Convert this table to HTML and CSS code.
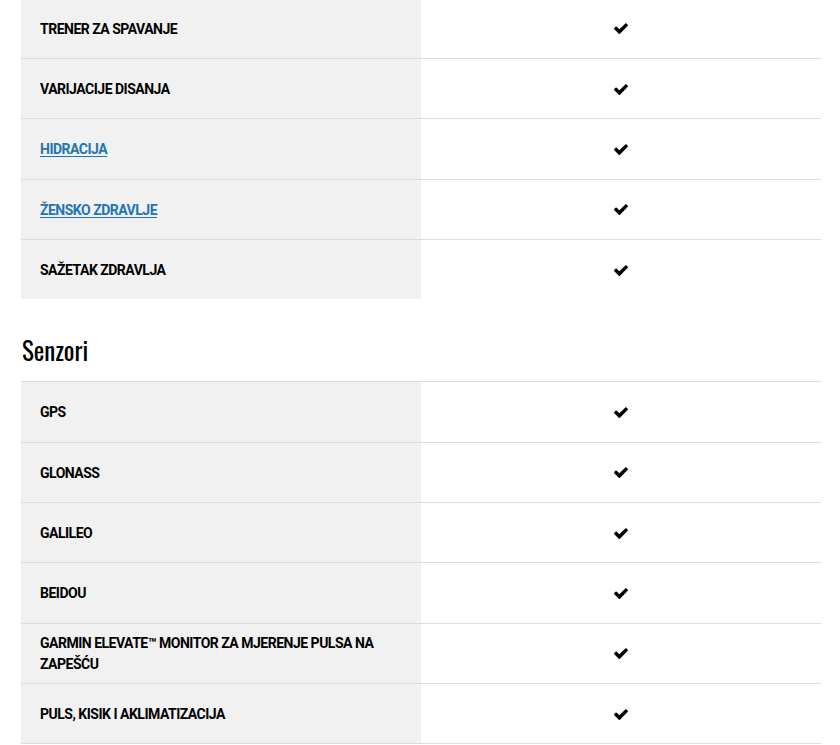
FILE: index.html
```html
<!DOCTYPE html>
<html lang="hr">
<head>
<meta charset="utf-8">
<title>Specifikacije</title>
<link rel="stylesheet" href="styles.css">
</head>
<body>
<div class="page">
  <div class="spec-table spec-table--first">
    <div class="spec-row"><div class="spec-name">TRENER ZA SPAVANJE</div><div class="spec-val"><svg class="check" viewBox="121 330 1550 1192"><path d="M1671 566q0 40-28 68l-724 724-136 136q-28 28-68 28t-68-28l-136-136-362-362q-28-28-28-68t28-68l136-136q28-28 68-28t68 28l294 295 656-657q28-28 68-28t68 28l136 136q28 28 28 68z"/></svg></div></div>
    <div class="spec-row"><div class="spec-name">VARIJACIJE DISANJA</div><div class="spec-val"><svg class="check" viewBox="121 330 1550 1192"><path d="M1671 566q0 40-28 68l-724 724-136 136q-28 28-68 28t-68-28l-136-136-362-362q-28-28-28-68t28-68l136-136q28-28 68-28t68 28l294 295 656-657q28-28 68-28t68 28l136 136q28 28 28 68z"/></svg></div></div>
    <div class="spec-row"><div class="spec-name"><a class="spec-link" href="#">HIDRACIJA</a></div><div class="spec-val"><svg class="check" viewBox="121 330 1550 1192"><path d="M1671 566q0 40-28 68l-724 724-136 136q-28 28-68 28t-68-28l-136-136-362-362q-28-28-28-68t28-68l136-136q28-28 68-28t68 28l294 295 656-657q28-28 68-28t68 28l136 136q28 28 28 68z"/></svg></div></div>
    <div class="spec-row"><div class="spec-name"><a class="spec-link" href="#">ŽENSKO ZDRAVLJE</a></div><div class="spec-val"><svg class="check" viewBox="121 330 1550 1192"><path d="M1671 566q0 40-28 68l-724 724-136 136q-28 28-68 28t-68-28l-136-136-362-362q-28-28-28-68t28-68l136-136q28-28 68-28t68 28l294 295 656-657q28-28 68-28t68 28l136 136q28 28 28 68z"/></svg></div></div>
    <div class="spec-row"><div class="spec-name">SAŽETAK ZDRAVLJA</div><div class="spec-val"><svg class="check" viewBox="121 330 1550 1192"><path d="M1671 566q0 40-28 68l-724 724-136 136q-28 28-68 28t-68-28l-136-136-362-362q-28-28-28-68t28-68l136-136q28-28 68-28t68 28l294 295 656-657q28-28 68-28t68 28l136 136q28 28 28 68z"/></svg></div></div>
  </div>

  <h2 class="section-title">Senzori</h2>

  <div class="spec-table spec-table--closed">
    <div class="spec-row"><div class="spec-name">GPS</div><div class="spec-val"><svg class="check" viewBox="121 330 1550 1192"><path d="M1671 566q0 40-28 68l-724 724-136 136q-28 28-68 28t-68-28l-136-136-362-362q-28-28-28-68t28-68l136-136q28-28 68-28t68 28l294 295 656-657q28-28 68-28t68 28l136 136q28 28 28 68z"/></svg></div></div>
    <div class="spec-row"><div class="spec-name">GLONASS</div><div class="spec-val"><svg class="check" viewBox="121 330 1550 1192"><path d="M1671 566q0 40-28 68l-724 724-136 136q-28 28-68 28t-68-28l-136-136-362-362q-28-28-28-68t28-68l136-136q28-28 68-28t68 28l294 295 656-657q28-28 68-28t68 28l136 136q28 28 28 68z"/></svg></div></div>
    <div class="spec-row"><div class="spec-name">GALILEO</div><div class="spec-val"><svg class="check" viewBox="121 330 1550 1192"><path d="M1671 566q0 40-28 68l-724 724-136 136q-28 28-68 28t-68-28l-136-136-362-362q-28-28-28-68t28-68l136-136q28-28 68-28t68 28l294 295 656-657q28-28 68-28t68 28l136 136q28 28 28 68z"/></svg></div></div>
    <div class="spec-row"><div class="spec-name">BEIDOU</div><div class="spec-val"><svg class="check" viewBox="121 330 1550 1192"><path d="M1671 566q0 40-28 68l-724 724-136 136q-28 28-68 28t-68-28l-136-136-362-362q-28-28-28-68t28-68l136-136q28-28 68-28t68 28l294 295 656-657q28-28 68-28t68 28l136 136q28 28 28 68z"/></svg></div></div>
    <div class="spec-row"><div class="spec-name">GARMIN ELEVATE™ MONITOR ZA MJERENJE PULSA NA ZAPEŠĆU</div><div class="spec-val"><svg class="check" viewBox="121 330 1550 1192"><path d="M1671 566q0 40-28 68l-724 724-136 136q-28 28-68 28t-68-28l-136-136-362-362q-28-28-28-68t28-68l136-136q28-28 68-28t68 28l294 295 656-657q28-28 68-28t68 28l136 136q28 28 28 68z"/></svg></div></div>
    <div class="spec-row"><div class="spec-name">PULS, KISIK I AKLIMATIZACIJA</div><div class="spec-val"><svg class="check" viewBox="121 330 1550 1192"><path d="M1671 566q0 40-28 68l-724 724-136 136q-28 28-68 28t-68-28l-136-136-362-362q-28-28-28-68t28-68l136-136q28-28 68-28t68 28l294 295 656-657q28-28 68-28t68 28l136 136q28 28 28 68z"/></svg></div></div>
  </div>
</div>
</body>
</html>
```

FILE: styles.css
```css
html, body {
  margin: 0;
  padding: 0;
  background: #fff;
}

body {
  font-family: Roboto, "Liberation Sans", Arial, sans-serif;
  color: #000;
  overflow: hidden;
}

.page {
  width: 800px;
  margin-left: 21px;
}

.spec-table {
  display: flex;
  flex-direction: column;
}

.spec-table--first {
  margin-top: -2.33px;
}

.spec-table--closed {
  border-bottom: 1px solid #dcdcdc;
}

.spec-row {
  display: grid;
  grid-template-columns: 400px 400px;
  height: 60.33px;
  box-sizing: border-box;
  border-top: 1px solid #dcdcdc;
}

.spec-name {
  background: #f1f1f1;
  display: flex;
  align-items: center;
  padding: 2px 20px 0 19px;
  font-size: 14px;
  font-weight: 700;
  line-height: 21px;
  letter-spacing: -0.5px;
}

.spec-link {
  color: #1f75b3;
  text-decoration: underline;
  text-underline-offset: 2px;
}

.spec-val {
  display: flex;
  align-items: center;
  justify-content: center;
  padding-top: 1px;
}

.check {
  width: 14px;
  height: 11px;
  fill: #000;
}

.section-title {
  margin: 0;
  padding: 36px 0 16px 1px;
  font-family: "Oswald", "Roboto Condensed", "Liberation Sans Narrow", "DejaVu Sans Condensed", sans-serif;
  font-weight: 400;
  font-size: 25px;
  line-height: 30px;
  letter-spacing: 0;
}
```
